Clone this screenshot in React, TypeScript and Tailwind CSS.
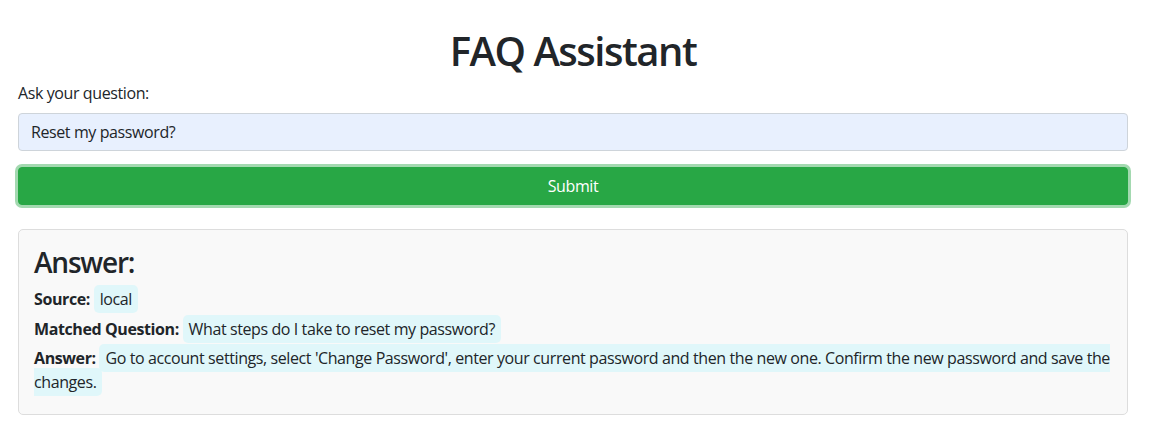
import React from "react";

const font = { fontFamily: '"Open Sans", "Noto Sans", sans-serif' };

function Field({ label, value }: { label: string; value: string }) {
  return (
    <p className="mb-[5.5px] leading-6">
      <strong className="font-bold">{label}</strong>{" "}
      <span className="bg-[#e0f7fa] px-[6px] py-[3px] rounded-[5px]">{value}</span>
    </p>
  );
}

export default function App() {
  return (
    <div className="bg-white text-[#212529] text-base tracking-[-0.4px]" style={font}>
      <div className="pl-[18px] pr-[22px] pt-px">
        <h1 className="mt-[28px] mb-2 text-center text-[40px] leading-[44px] font-semibold tracking-[-1.5px]">
          FAQ Assistant
        </h1>
        <label className="block mb-2 leading-6">Ask your question:</label>
        <input
          className="block w-full h-[38px] px-3 border border-[#ced4da] rounded-[4px] bg-[#e8f0fe] text-[#212529] outline-none"
          defaultValue="Reset my password?"
        />
        <button className="mt-4 block w-full h-[38px] rounded-[4px] border border-[#28a745] bg-[#28a745] text-white shadow-[0_0_0_3px_rgba(72,180,97,0.5)]">
          Submit
        </button>
        <div className="mt-6 border border-[#dddddd] rounded-[5px] bg-[#f9f9f9] px-[15px] pt-[15px] pb-[14px]">
          <h3 className="text-[28px] leading-[34px] font-semibold mb-2 tracking-[-1.2px]">Answer:</h3>
          <Field label="Source:" value="local" />
          <Field label="Matched Question:" value="What steps do I take to reset my password?" />
          <Field
            label="Answer:"
            value="Go to account settings, select 'Change Password', enter your current password and then the new one. Confirm the new password and save the changes."
          />
        </div>
      </div>
    </div>
  );
}
